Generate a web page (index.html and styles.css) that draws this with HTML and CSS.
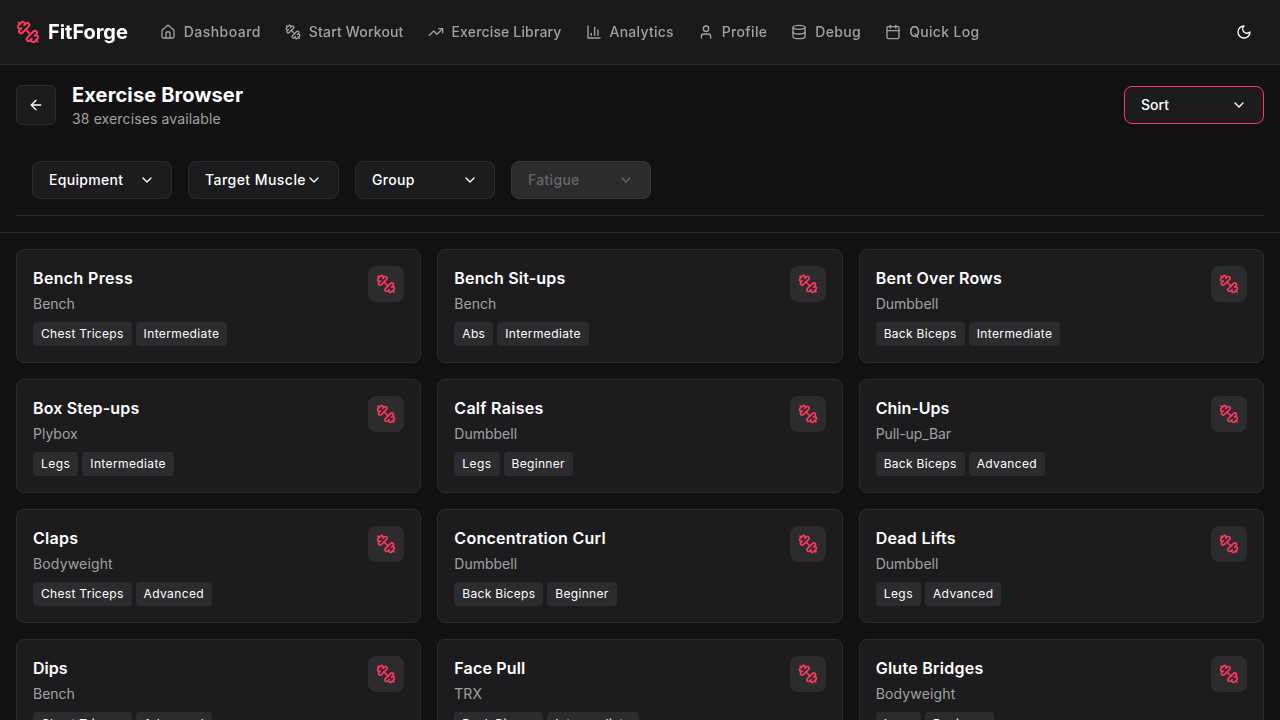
FILE: index.html
```html
<!DOCTYPE html>
<html lang="en">
<head>
<meta charset="utf-8">
<title>FitForge</title>
<link rel="stylesheet" href="styles.css">
</head>
<body>
<svg class="sprite" aria-hidden="true">
  <symbol id="dumbbell" viewBox="0 0 24 24"><path d="M14.4 14.4 9.6 9.6"/><path d="M18.657 21.485a2 2 0 1 1-2.829-2.828l-1.767 1.768a2 2 0 1 1-2.829-2.829l6.364-6.364a2 2 0 1 1 2.829 2.829l-1.768 1.767a2 2 0 1 1 2.828 2.829z"/><path d="m21.5 21.5-1.4-1.4"/><path d="M3.9 3.9 2.5 2.5"/><path d="M6.404 12.768a2 2 0 1 1-2.829-2.829l1.768-1.767a2 2 0 1 1-2.828-2.829l2.828-2.828a2 2 0 1 1 2.829 2.828l1.767-1.768a2 2 0 1 1 2.829 2.829z"/></symbol>
  <symbol id="chevron" viewBox="0 0 24 24"><path d="m6 9 6 6 6-6"/></symbol>
</svg>
<header class="topbar">
  <a class="brand"><svg class="icon icon-lg"><use href="#dumbbell"/></svg><span>FitForge</span></a>
  <nav class="nav">
    <a class="nav-link ls-45"><svg class="icon" viewBox="0 0 24 24"><path d="M15 21v-8a1 1 0 0 0-1-1h-4a1 1 0 0 0-1 1v8"/><path d="M3 10a2 2 0 0 1 .709-1.528l7-5.999a2 2 0 0 1 2.582 0l7 5.999A2 2 0 0 1 21 10v9a2 2 0 0 1-2 2H5a2 2 0 0 1-2-2z"/></svg><span>Dashboard</span></a>
    <a class="nav-link ls-15"><svg class="icon"><use href="#dumbbell"/></svg><span>Start Workout</span></a>
    <a class="nav-link ls-15"><svg class="icon" viewBox="0 0 24 24"><path d="m22 7-8.5 8.5-5-5L2 17"/><path d="M16 7h6v6"/></svg><span>Exercise Library</span></a>
    <a class="nav-link ls-25"><svg class="icon" viewBox="0 0 24 24"><path d="M3 3v18h18"/><path d="M18 17V9"/><path d="M13 17V5"/><path d="M8 17v-3"/></svg><span>Analytics</span></a>
    <a class="nav-link ls-35"><svg class="icon" viewBox="0 0 24 24"><path d="M19 21v-2a4 4 0 0 0-4-4H9a4 4 0 0 0-4 4v2"/><circle cx="12" cy="7" r="4"/></svg><span>Profile</span></a>
    <a class="nav-link ls-35"><svg class="icon" viewBox="0 0 24 24"><ellipse cx="12" cy="5" rx="9" ry="3"/><path d="M3 5v14a9 3 0 0 0 18 0V5"/><path d="M3 12a9 3 0 0 0 18 0"/></svg><span>Debug</span></a>
    <a class="nav-link ls-35"><svg class="icon" viewBox="0 0 24 24"><path d="M8 2v4"/><path d="M16 2v4"/><rect x="3" y="4" width="18" height="18" rx="2"/><path d="M3 10h18"/></svg><span>Quick Log</span></a>
  </nav>
  <button class="theme-toggle" aria-label="Toggle theme"><svg class="icon" viewBox="0 0 24 24"><path d="M12 3a6 6 0 0 0 9 9 9 9 0 1 1-9-9Z"/></svg></button>
</header>

<section class="page-head">
  <div class="title-row">
    <button class="back" aria-label="Back"><svg class="icon" viewBox="0 0 24 24"><path d="m12 19-7-7 7-7"/><path d="M19 12H5"/></svg></button>
    <div class="titles">
      <h1 class="title">Exercise Browser</h1>
      <p class="subtitle">38 exercises available</p>
    </div>
    <button class="select select-active ls-0"><span>Sort</span><svg class="icon"><use href="#chevron"/></svg></button>
  </div>
  <div class="filters">
    <button class="select"><span>Equipment</span><svg class="icon"><use href="#chevron"/></svg></button>
    <button class="select ls-45"><span>Target Muscle</span><svg class="icon"><use href="#chevron"/></svg></button>
    <button class="select"><span>Group</span><svg class="icon"><use href="#chevron"/></svg></button>
    <button class="select select-disabled" disabled><span>Fatigue</span><svg class="icon"><use href="#chevron"/></svg></button>
  </div>
</section>

<main class="grid">
  <article class="card"><div><h3 class="name ls-35">Bench Press</h3><p class="gear">Bench</p><div class="tags"><span class="tag">Chest Triceps</span><span class="tag tag-wide">Intermediate</span></div></div><div class="badge"><svg class="icon icon-md"><use href="#dumbbell"/></svg></div></article>
  <article class="card"><div><h3 class="name ls-15">Bench Sit-ups</h3><p class="gear">Bench</p><div class="tags"><span class="tag">Abs</span><span class="tag tag-wide">Intermediate</span></div></div><div class="badge"><svg class="icon icon-md"><use href="#dumbbell"/></svg></div></article>
  <article class="card"><div><h3 class="name">Bent Over Rows</h3><p class="gear">Dumbbell</p><div class="tags"><span class="tag">Back Biceps</span><span class="tag tag-wide">Intermediate</span></div></div><div class="badge"><svg class="icon icon-md"><use href="#dumbbell"/></svg></div></article>
  <article class="card"><div><h3 class="name ls-15">Box Step-ups</h3><p class="gear">Plybox</p><div class="tags"><span class="tag ls-45">Legs</span><span class="tag tag-wide">Intermediate</span></div></div><div class="badge"><svg class="icon icon-md"><use href="#dumbbell"/></svg></div></article>
  <article class="card"><div><h3 class="name">Calf Raises</h3><p class="gear">Dumbbell</p><div class="tags"><span class="tag ls-45">Legs</span><span class="tag">Beginner</span></div></div><div class="badge"><svg class="icon icon-md"><use href="#dumbbell"/></svg></div></article>
  <article class="card"><div><h3 class="name ls-0">Chin-Ups</h3><p class="gear gear-tight">Pull-up_Bar</p><div class="tags"><span class="tag">Back Biceps</span><span class="tag tag-wide">Advanced</span></div></div><div class="badge"><svg class="icon icon-md"><use href="#dumbbell"/></svg></div></article>
  <article class="card"><div><h3 class="name">Claps</h3><p class="gear ls-15">Bodyweight</p><div class="tags"><span class="tag">Chest Triceps</span><span class="tag tag-wide">Advanced</span></div></div><div class="badge"><svg class="icon icon-md"><use href="#dumbbell"/></svg></div></article>
  <article class="card"><div><h3 class="name">Concentration Curl</h3><p class="gear">Dumbbell</p><div class="tags"><span class="tag">Back Biceps</span><span class="tag">Beginner</span></div></div><div class="badge"><svg class="icon icon-md"><use href="#dumbbell"/></svg></div></article>
  <article class="card"><div><h3 class="name">Dead Lifts</h3><p class="gear">Dumbbell</p><div class="tags"><span class="tag ls-45">Legs</span><span class="tag tag-wide">Advanced</span></div></div><div class="badge"><svg class="icon icon-md"><use href="#dumbbell"/></svg></div></article>
  <article class="card"><div><h3 class="name ls-0">Dips</h3><p class="gear">Bench</p><div class="tags"><span class="tag">Chest Triceps</span><span class="tag tag-wide">Advanced</span></div></div><div class="badge"><svg class="icon icon-md"><use href="#dumbbell"/></svg></div></article>
  <article class="card"><div><h3 class="name ls-15">Face Pull</h3><p class="gear">TRX</p><div class="tags"><span class="tag">Back Biceps</span><span class="tag tag-wide">Intermediate</span></div></div><div class="badge"><svg class="icon icon-md"><use href="#dumbbell"/></svg></div></article>
  <article class="card"><div><h3 class="name">Glute Bridges</h3><p class="gear ls-15">Bodyweight</p><div class="tags"><span class="tag ls-45">Legs</span><span class="tag">Beginner</span></div></div><div class="badge"><svg class="icon icon-md"><use href="#dumbbell"/></svg></div></article>
</main>
</body>
</html>
```
FILE: styles.css
```css
*, *::before, *::after { box-sizing: border-box; }

body {
  margin: 0;
  height: 100vh;
  overflow: hidden;
  background: #121212;
  color: #fff;
  font-family: Inter, "Liberation Sans", sans-serif;
  font-size: 16px;
  line-height: 24px;
}

h1, h3, p { margin: 0; }

button {
  font: inherit;
  color: inherit;
  margin: 0;
}

.sprite { display: none; }

.icon {
  width: 16px;
  height: 16px;
  flex: none;
  display: block;
  fill: none;
  stroke: currentColor;
  stroke-width: 2;
  stroke-linecap: round;
  stroke-linejoin: round;
}
.icon-md { width: 20px; height: 20px; }
.icon-lg { width: 24px; height: 24px; }

.topbar {
  height: 65px;
  padding: 0 16px;
  display: flex;
  align-items: center;
  background: #1a1a1a;
  border-bottom: 1px solid #2c2c2e;
  will-change: transform;
}
.brand {
  display: flex;
  align-items: center;
  gap: 8px;
  margin-right: 32px;
  font-size: 20px;
  line-height: 28px;
  font-weight: 700;
  letter-spacing: -0.05px;
}
.brand .icon { color: #ff375f; }
.nav { display: flex; gap: 24px; }
.nav-link {
  display: flex;
  align-items: center;
  gap: 8px;
  color: #a1a1a1;
  font-size: 14px;
  line-height: 20px;
  font-weight: 500;
}
.theme-toggle {
  width: 40px;
  height: 40px;
  margin-left: auto;
  padding: 0;
  display: grid;
  place-items: center;
  background: none;
  border: 0;
}

.page-head {
  padding: 16px;
  border-bottom: 1px solid #2c2c2e;
}
.title-row { display: flex; align-items: center; gap: 16px; margin-bottom: 16px; }
.titles { flex: 1; }
.title { font-size: 20px; line-height: 28px; font-weight: 700; letter-spacing: 0.13px; }
.subtitle { color: #a1a1a1; font-size: 14px; line-height: 20px; letter-spacing: 0.13px; }
.back {
  width: 40px;
  height: 40px;
  padding: 0;
  display: grid;
  place-items: center;
  background: #1c1c1e;
  border: 1px solid #2c2c2e;
  border-radius: 6px;
}

.select {
  min-width: 140px;
  height: 38px;
  padding: 0 16px;
  display: flex;
  align-items: center;
  justify-content: space-between;
  background: #1c1c1e;
  border: 1px solid #2c2c2e;
  border-radius: 8px;
  font-size: 14px;
  line-height: 20px;
  font-weight: 500;
  letter-spacing: 0.3px;
}
.select-active { border-color: #ff375f; }
.select-disabled { background: #2c2c2e; border-color: #3a3a3c; color: #666; }

.filters {
  display: flex;
  gap: 16px;
  padding: 16px;
  border-bottom: 1px solid #2c2c2e;
}

.grid {
  display: grid;
  grid-template-columns: repeat(3, 1fr);
  gap: 16px;
  padding: 16px;
}
.card {
  display: flex;
  justify-content: space-between;
  align-items: flex-start;
  padding: 16px;
  background: #1c1c1e;
  border: 1px solid #2c2c2e;
  border-radius: 8px;
  box-shadow: 0 1px 2px rgba(0, 0, 0, 0.05);
}
.name { font-size: 16px; line-height: 24px; font-weight: 600; letter-spacing: 0.27px; }
.gear { margin-top: 4px; color: #a1a1a1; font-size: 14px; line-height: 20px; }
.gear-tight { letter-spacing: -0.1px; }
.tags { display: flex; gap: 4px; margin-top: 8px; }
.tag {
  padding: 4px 8px;
  background: #2c2c2e;
  border-radius: 4px;
  font-size: 12px;
  line-height: 16px;
  letter-spacing: 0.3px;
}
.tag-wide { letter-spacing: 0.38px; }
.badge {
  padding: 8px;
  background: #2c2c2e;
  border-radius: 8px;
  color: #ff375f;
}

/* Letter-spacing steps, in hundredths of a pixel */
.ls-0 { letter-spacing: 0; }
.ls-15 { letter-spacing: 0.16px; }
.ls-25 { letter-spacing: 0.23px; }
.ls-35 { letter-spacing: 0.34px; }
.ls-45 { letter-spacing: 0.45px; }
```
